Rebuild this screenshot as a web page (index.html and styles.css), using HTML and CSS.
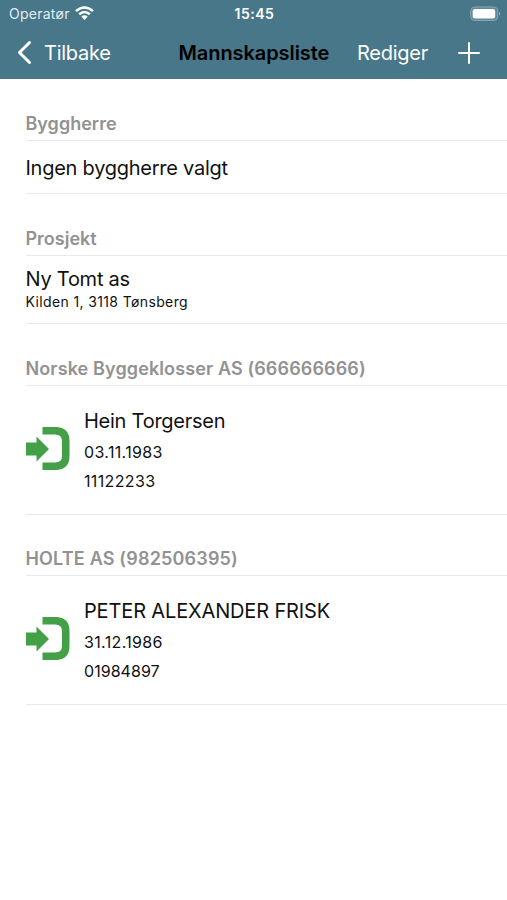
FILE: index.html
```html
<!DOCTYPE html>
<html lang="no">
<head>
<meta charset="utf-8">
<title>Mannskapsliste</title>
<link rel="stylesheet" href="styles.css">
</head>
<body>
<header class="header">
  <div class="status">
    <div class="carrier"><span>Operatør</span>
      <svg class="wifi" width="19" height="15" viewBox="0 0 19 15" fill="none" stroke="#fff" stroke-width="2.5"><path d="M1 5.1Q9.500-2.100 18 5.100M4.200 8.300Q9.500 3.700 14.800 8.300"/><path d="M6.300 10.600Q9.500 7.900 12.700 10.600L9.500 14Z" fill="#fff" stroke="none"/></svg>
    </div>
    <time class="clock">15:45</time>
    <svg class="battery" width="31" height="16" viewBox="0 0 31 16"><rect x=".7" y="1" width="27" height="13.500" rx="4" fill="#5f8998" stroke="#86a5b1" stroke-width="1"/><rect x="2.700" y="3" width="22.500" height="9.500" rx="2.200" fill="#fff"/><path d="M29 5.500Q31.200 7.800 29 10Z" fill="#9bb4be"/></svg>
  </div>
  <nav class="nav">
    <a class="back"><svg width="17" height="26" viewBox="0 0 17 26" fill="none" stroke="#fff" stroke-width="3" stroke-linecap="round" stroke-linejoin="round"><path d="M13.500 2.500L3.500 12.500L13.500 22.500"/></svg><span>Tilbake</span></a>
    <h1 class="title">Mannskapsliste</h1>
    <a class="edit">Rediger</a>
    <svg class="add" width="22" height="22" viewBox="0 0 22 22" stroke="#fff" stroke-width="2" stroke-linecap="round"><path d="M11 1V21M1 11H21"/></svg>
  </nav>
</header>
<main class="list">
  <section class="group client">
    <h2>Byggherre</h2>
    <div class="row"><p class="name">Ingen byggherre valgt</p></div>
  </section>
  <section class="group project">
    <h2>Prosjekt</h2>
    <div class="row"><p class="name">Ny Tomt as</p><p class="address">Kilden 1, 3118 Tønsberg</p></div>
  </section>
  <section class="group crew">
    <h2>Norske Byggeklosser AS (666666666)</h2>
    <div class="row">
      <svg class="enter" width="44" height="44" viewBox="0 0 44 44" fill="#43a047"><path d="M0 15.500H10.500V9.500L23 22L10.500 34.500V28.500H0ZM16.500 0H31Q43.500 1 43.500 14V29Q43.500 42 31 43H16.500V35.500H29Q36 35.500 36 29V14Q36 7.500 29 7.500H16.500Z"/></svg>
      <div class="person"><p class="name">Hein Torgersen</p><p class="detail date">03.11.1983</p><p class="detail date">11122233</p></div>
    </div>
  </section>
  <section class="group crew">
    <h2 class="caps-heading">HOLTE AS (982506395)</h2>
    <div class="row">
      <svg class="enter" width="44" height="44" viewBox="0 0 44 44" fill="#43a047"><path d="M0 15.500H10.500V9.500L23 22L10.500 34.500V28.500H0ZM16.500 0H31Q43.500 1 43.500 14V29Q43.500 42 31 43H16.500V35.500H29Q36 35.500 36 29V14Q36 7.500 29 7.500H16.500Z"/></svg>
      <div class="person"><p class="name caps">PETER ALEXANDER FRISK</p><p class="detail date">31.12.1986</p><p class="detail">01984897</p></div>
    </div>
  </section>
</main>
</body>
</html>
```
FILE: styles.css
```css
* { box-sizing: border-box; }
body { margin: 0; height: 900px; overflow: hidden; background: #fff; color: #111; font-family: Inter, sans-serif; }
h1, h2, p { margin: 0; white-space: nowrap; }
.header { height: 79px; background: #477788; color: #fff; }
.status { display: grid; grid-template-columns: 1fr auto 1fr; align-items: center; height: 27px; padding: 0 6px 0 9px; font-size: 14px; line-height: 27px; }
.carrier { display: flex; align-items: center; gap: 5px; color: #e4edf1; letter-spacing: .25px; }
.clock { margin-right: 1px; font-weight: 600; letter-spacing: .5px; }
.battery { justify-self: end; }
.nav { display: flex; align-items: center; height: 51px; padding-left: 16px; font-size: 20px; line-height: 51px; letter-spacing: -.27px; }
.back span, .title, .edit { padding-top: 1px; }
.back { display: flex; align-items: center; width: 162.500px; gap: 11px; }
.title { width: 178.500px; color: #000; font-size: 20px; font-weight: 600; letter-spacing: -.08px; }
.edit { width: 101px; }
.list { padding-left: 25.500px; }
.group h2 { display: flex; align-items: flex-end; height: 62px; padding-bottom: 5px; border-bottom: 1px solid #e8e8e8; color: #929292; font-size: 18px; font-weight: 600; line-height: 22px; }
.row { border-bottom: 1px solid #e8e8e8; }
.name { font-size: 20px; line-height: 26px; letter-spacing: -.25px; }
.name.caps { letter-spacing: -.15px; }
.client .row { height: 53px; padding-top: 14px; }
.project .row { height: 68px; padding-top: 10px; }
.address { font-size: 14px; line-height: 20px; letter-spacing: .37px; }
.crew .row { display: flex; align-items: center; gap: 14.500px; height: 129px; }
.crew h2 { letter-spacing: .12px; }
.crew + .crew h2 { height: 61px; }
.group .caps-heading { letter-spacing: .18px; }
.enter { flex: none; margin-bottom: 2px; }
.detail { margin-top: 7px; font-size: 16px; line-height: 22px; letter-spacing: .05px; }
.date { letter-spacing: .35px; }
```
